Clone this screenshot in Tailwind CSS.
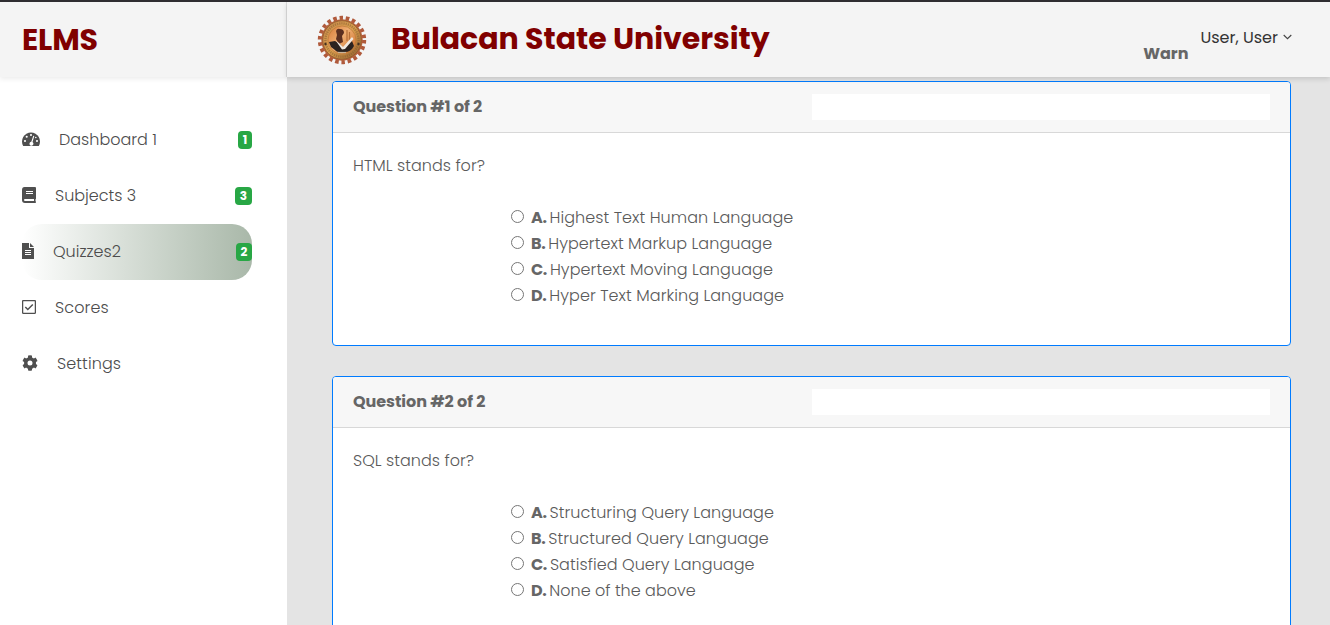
<!DOCTYPE html>
<html lang="en">
<head>
<meta charset="utf-8">
<title>ELMS</title>
<script src="https://cdn.jsdelivr.net/npm/@tailwindcss/browser@4"></script>
</head>
<body class="flex h-[625px] w-[1330px] flex-col overflow-hidden border-t-2 border-[#2f2d31] bg-[#e4e4e4] font-[Poppins,Inter,sans-serif] text-base leading-[26px] font-light text-[#4c4c4c]">
<div class="flex h-[623px]">
  <aside class="flex w-[287px] shrink-0 flex-col bg-white">
    <div class="z-10 flex h-[75px] shrink-0 items-center border-r border-[#dcdcdc] bg-[#f4f4f4] pl-[22px] shadow-[0_2px_5px_rgba(0,0,0,0.08)]">
      <span class="text-[30px] font-bold tracking-[-0.2px] text-[#800000]">ELMS</span>
    </div>
    <nav class="mt-[35px] ml-[22px] flex w-[230px] flex-col">
      <a class="flex h-14 items-center">
        <svg class="w-[18px] h-4 mr-[19px] mb-[2px]" viewBox="0 0 18 16"><path fill="#4f4f4f" d="M1.2 15A9 9 0 1 1 16.8 15Q16.600 15 16 15H2Q1.400 15 1.200 15Z"/><g fill="#fff"><circle cx="9" cy="4" r="1.050"/><circle cx="4.700" cy="5.800" r="1.050"/><circle cx="3" cy="10" r="1.050"/><circle cx="15" cy="10" r="1.050"/><circle cx="13.800" cy="6.500" r=".8"/><path d="M11.300 4.700l1 .3-1.800 6a2 2 0 1 1-1.200-.3z"/></g></svg>
        <span>Dashboard 1</span>
        <span class="ml-auto flex h-[18px] w-[14px] items-center justify-center rounded bg-[#28a745] text-xs font-bold text-white">1</span>
      </a>
      <a class="flex h-14 items-center">
        <svg class="w-[14px] h-4 mr-[19px] mb-[2px]" viewBox="0 0 14 16"><path fill="#4f4f4f" d="M2.500 0H13q1 0 1 1v10.500q0 .6-.5.800v2q.5.200.5.900t-.8.800H3Q0 16 0 13V3Q0 0 2.500 0Z"/><path fill="#fff" d="M4 4h7v1H4zM4 6h7v1H4zM3 12h9v2H3q-1 0-1-1t1-1z"/></svg>
        <span>Subjects 3</span>
        <span class="ml-auto flex h-[18px] w-[17px] items-center justify-center rounded bg-[#28a745] text-xs font-bold text-white">3</span>
      </a>
      <a class="flex h-14 items-center rounded-[20px] bg-linear-to-r from-white to-[#a9b8a9]">
        <svg class="w-3 h-4 mr-[19px] mb-[2px]" viewBox="0 0 12 16"><path fill="#4f4f4f" d="M0 0H7V5H12V16H0ZM8 0L12 4H8Z"/><path fill="#fff" d="M3 7h6v1H3zM3 9h6v1H3zM3 11h6v1H3z"/></svg>
        <span>Quizzes2</span>
        <span class="ml-auto flex h-[18px] w-4 items-center justify-center rounded bg-[#28a745] text-xs font-bold text-white">2</span>
      </a>
      <a class="flex h-14 items-center">
        <svg class="w-[14px] h-[14px] mr-[19px] mb-[2px]" viewBox="0 0 14 14" fill="none" stroke="#4f4f4f"><rect x=".6" y=".6" width="12.800" height="12.800" rx=".8" stroke-width="1.300"/><path d="M3.300 7l2.500 2.500 5-5" stroke-width="1.500"/></svg>
        <span class="tracking-[0.1px]">Scores</span>
      </a>
      <a class="flex h-14 items-center">
        <svg class="w-4 h-4 mr-[19px] mb-[2px]" viewBox="0 0 512 512"><path fill="#4f4f4f" d="M487 316l-42-25q6-35 0-70l42-25q8-5 5-14-17-53-54-94-6-7-14-2l-43 25q-27-23-61-35V26q0-9-9-11-55-12-109 0-9 2-9 11v50q-34 12-61 35L89 86q-8-5-14 2-37 41-54 94-3 9 5 14l43 25q-7 35 0 70l-43 25q-8 5-5 14 17 53 54 94 6 7 14 2l43-25q27 23 61 35v50q0 9 9 11 55 12 109 0 9-2 9-11v-50q34-12 61-35l43 25q8 5 14-2 37-41 54-94 3-9-5-14zM256 336a80 80 0 1 1 0-160 80 80 0 0 1 0 160z"/></svg>
        <span class="tracking-[0.1px]">Settings</span>
      </a>
    </nav>
  </aside>
  <div class="flex w-[1043px] flex-col">
    <header class="z-10 flex h-[75px] shrink-0 bg-[#f4f4f4] pr-[38px] pl-[30px] shadow-[0_2px_5px_rgba(0,0,0,0.14)]">
      <svg class="mt-[13px] h-[50px] w-[50px]" viewBox="-25 -25 50 50">
        <defs><linearGradient id="ring" x1="0" y1="0" x2="1" y2="1"><stop offset="0" stop-color="#c98a4c"/><stop offset=".5" stop-color="#dca04e"/><stop offset="1" stop-color="#8f5b2c"/></linearGradient><linearGradient id="disc" x1="0" y1="0" x2="1" y2=".8"><stop offset="0" stop-color="#d77a36"/><stop offset=".5" stop-color="#efae72"/><stop offset="1" stop-color="#cf7430"/></linearGradient></defs>
        <circle r="22" fill="none" stroke="#b05a3c" stroke-width="4.400" stroke-dasharray="3.500 2.783"/>
        <circle r="20.700" fill="#b8643c"/>
        <circle r="19.200" fill="url(#ring)" stroke="#7c5429" stroke-width=".6"/>
        <circle r="16.600" fill="none" stroke="#80592f" stroke-width="2.400" stroke-dasharray="1.300 .9" opacity=".5"/>
        <circle r="14" fill="url(#disc)" stroke="#b97838" stroke-width=".7"/>
        <path d="M-6-9q1-3 4-2 4 0 4 4l-2 3 1 6-4 2-3-5 1-4z" fill="#5c3020"/>
        <path d="M5-10v11M7.500-8v8" stroke="#b56e38" stroke-width="1.200"/>
        <path d="M-13 2l6-1 5 3 3 4L10 1l2 5q-3 6-9 6-8 1-10-2l-4-3z" fill="#2b2320"/>
        <path d="M-6 1l3 2 4 4L10-3l1.500 2L3 9l-3 .5z" fill="#f0e9e2"/>
        <path d="M-4 12.500h8" stroke="#c9b59a" stroke-width="1.200"/>
        <circle cx="-16.500" cy="4" r="1.200" fill="#46301f"/><circle cx="16.500" cy="4" r="1.200" fill="#46301f"/>
      </svg>
      <h1 class="mt-[22px] ml-[24px] text-[30px] leading-[29px] font-bold tracking-[-0.03px] whitespace-nowrap text-[#800000]">Bulacan State University</h1>
      <span class="mt-[39px] ml-auto font-bold text-[#666]">Warn</span>
      <div class="mt-[23px] ml-3 flex font-normal text-[#333]"><span>User, User</span>
        <svg class="mt-[9px] ml-[5px] h-[6px] w-[9px]" viewBox="0 0 9 6" fill="none" stroke="#444" stroke-width="1.100"><path d="M.7 1l3.800 3.700L8.300 1"/></svg>
      </div>
    </header>
    <main class="flex flex-col gap-[30px] pt-1 pr-[39px] pl-[45px] text-[#5a5a5a]">
      <section class="h-[265px] rounded-[4px] border border-[#007bff] bg-white">
        <div class="flex h-[51px] items-center justify-between rounded-t-[3px] border-b border-[#d8d8d8] bg-[#f7f7f7] px-5">
          <b class="font-bold tracking-[-0.06px] text-[#666]">Question #1 of 2</b><span class="h-[26px] w-[458px] bg-white"></span>
        </div>
        <p class="mt-5 ml-5 tracking-[0.04px]">HTML stands for?</p>
        <div class="mt-[26px] ml-[178px] flex flex-col tracking-[0.06px]">
          <label class="flex"><input type="radio" class="mt-[5px] mr-[7px] h-[13px] w-[13px]"><b class="mr-[3px] font-bold tracking-[-0.4px] text-[#666]">A.</b><span>Highest Text Human Language</span></label>
          <label class="flex"><input type="radio" class="mt-[5px] mr-[7px] h-[13px] w-[13px]"><b class="mr-[3px] font-bold tracking-[-0.4px] text-[#666]">B.</b><span>Hypertext Markup Language</span></label>
          <label class="flex"><input type="radio" class="mt-[5px] mr-[7px] h-[13px] w-[13px]"><b class="mr-[3px] font-bold tracking-[-0.4px] text-[#666]">C.</b><span class="tracking-[0.09px]">Hypertext Moving Language</span></label>
          <label class="flex"><input type="radio" class="mt-[5px] mr-[7px] h-[13px] w-[13px]"><b class="mr-[3px] font-bold tracking-[-0.4px] text-[#666]">D.</b><span>Hyper Text Marking Language</span></label>
        </div>
      </section>
      <section class="h-[265px] shrink-0 rounded-[4px] border border-[#007bff] bg-white">
        <div class="flex h-[51px] items-center justify-between rounded-t-[3px] border-b border-[#d8d8d8] bg-[#f7f7f7] px-5">
          <b class="font-bold tracking-[-0.06px] text-[#666]">Question #2 of 2</b><span class="h-[26px] w-[458px] bg-white"></span>
        </div>
        <p class="mt-5 ml-5 tracking-[0.04px]">SQL stands for?</p>
        <div class="mt-[26px] ml-[178px] flex flex-col tracking-[0.06px]">
          <label class="flex"><input type="radio" class="mt-[5px] mr-[7px] h-[13px] w-[13px]"><b class="mr-[3px] font-bold tracking-[-0.4px] text-[#666]">A.</b><span>Structuring Query Language</span></label>
          <label class="flex"><input type="radio" class="mt-[5px] mr-[7px] h-[13px] w-[13px]"><b class="mr-[3px] font-bold tracking-[-0.4px] text-[#666]">B.</b><span>Structured Query Language</span></label>
          <label class="flex"><input type="radio" class="mt-[5px] mr-[7px] h-[13px] w-[13px]"><b class="mr-[3px] font-bold tracking-[-0.4px] text-[#666]">C.</b><span>Satisfied Query Language</span></label>
          <label class="flex"><input type="radio" class="mt-[5px] mr-[7px] h-[13px] w-[13px]"><b class="mr-[3px] font-bold tracking-[-0.4px] text-[#666]">D.</b><span class="tracking-normal">None of the above</span></label>
        </div>
      </section>
    </main>
  </div>
</div>
</body>
</html>
